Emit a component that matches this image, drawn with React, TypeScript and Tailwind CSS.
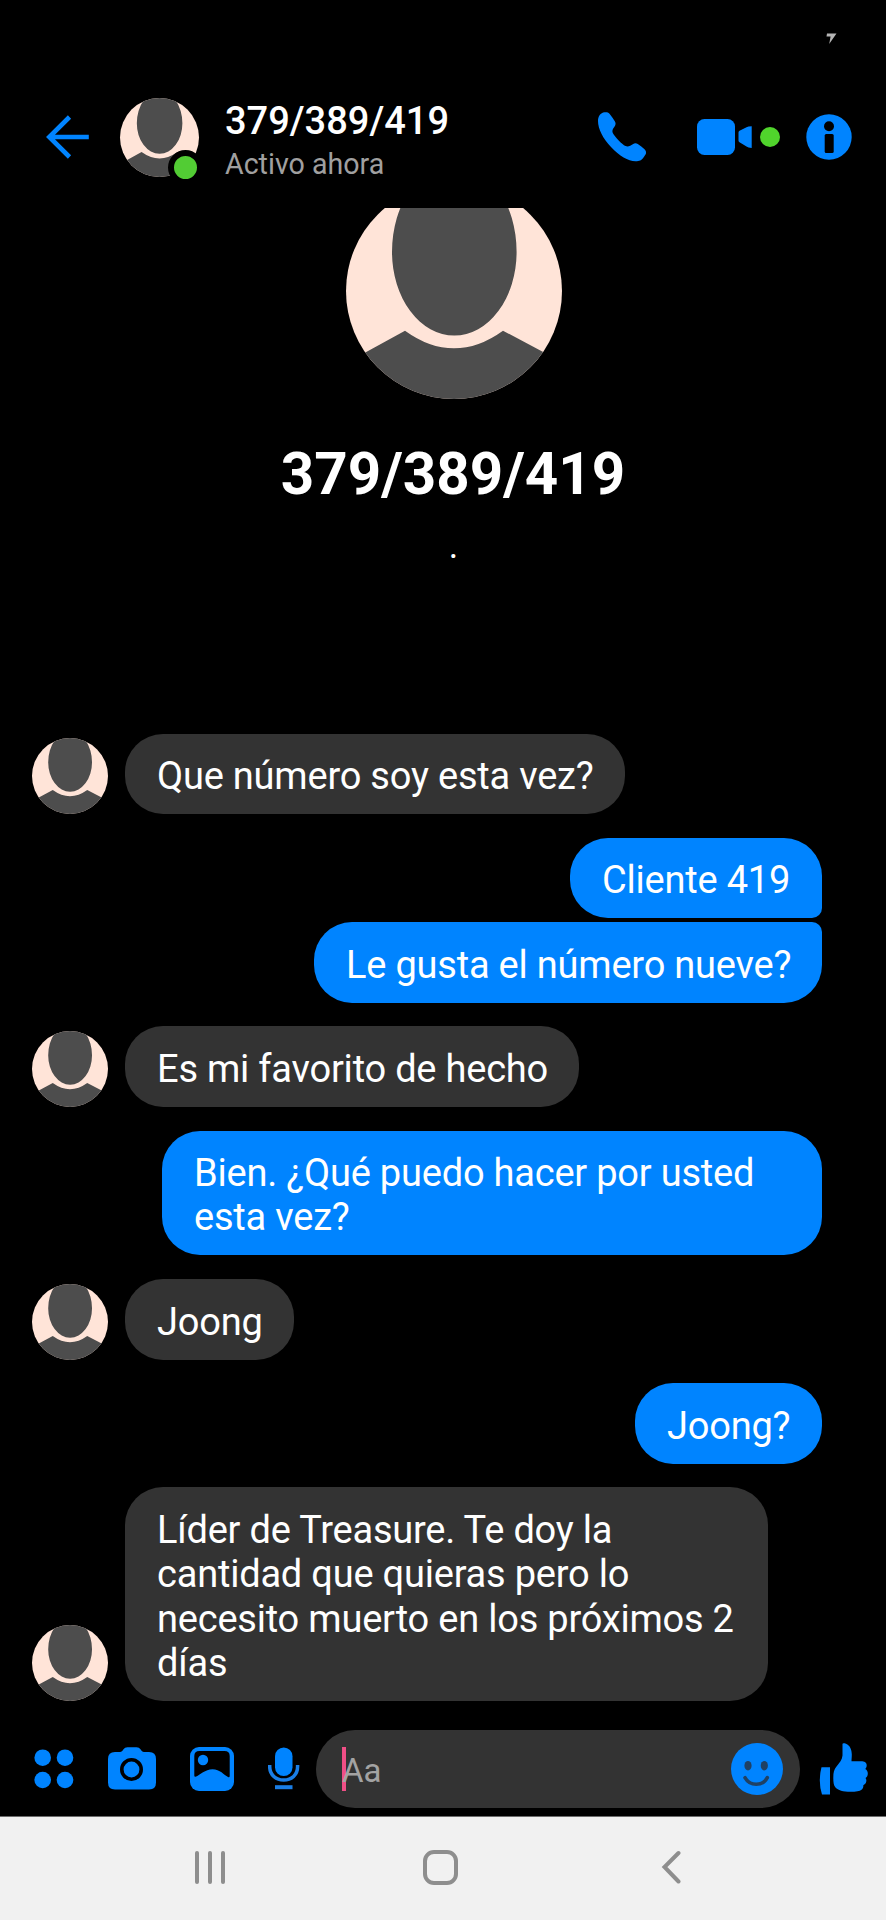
type Message = {
  text: string;
  mine: boolean;
  shape: string;
};

const CONTACT = '379/389/419';

const messages: Message[] = [
  { text: 'Que número soy esta vez?', mine: false, shape: 'w-[500px] rounded-[38px]' },
  { text: 'Cliente 419', mine: true, shape: 'mt-[23.6px] w-[252px] rounded-[38px] rounded-br-[10px]' },
  { text: 'Le gusta el número nueve?', mine: true, shape: 'mt-1 w-[508px] rounded-[38px] rounded-tr-[10px]' },
  { text: 'Es mi favorito de hecho', mine: false, shape: 'mt-[23.6px] w-[454px] rounded-[38px]' },
  { text: 'Bien. ¿Qué puedo hacer por usted\nesta vez?', mine: true, shape: 'mt-[23.6px] w-[660px] rounded-[38px]' },
  { text: 'Joong', mine: false, shape: 'mt-[23.6px] w-[169px] rounded-[38px]' },
  { text: 'Joong?', mine: true, shape: 'mt-[23.6px] w-[187px] rounded-[38px]' },
  {
    text: 'Líder de Treasure. Te doy la\ncantidad que quieras pero lo\nnecesito muerto en los próximos 2\ndías',
    mine: false,
    shape: 'mt-[23.6px] w-[643px] rounded-[38px]',
  },
];

function Avatar({ className }: { className: string }) {
  return (
    <div className={`shrink-0 overflow-hidden rounded-full bg-[#ffe4d8] ${className}`}>
      <svg viewBox="0 0 216 216" className="block size-full" fill="#4d4d4d">
        <path d="M46 69a62.3 88 0 0 1 124.6 0a62.3 83.5 0 0 1-124.6 0Z" />
        <path d="M-10 185L20.7 168.7L59 147.7Q108 183 157 147.7L196.7 168.7L226 185V216H-10Z" />
      </svg>
    </div>
  );
}

function Header() {
  return (
    <header className="flex h-[208px] shrink-0 flex-col">
      <div className="flex h-[97px] shrink-0 justify-end pt-[33px] pr-[49px]">
        <svg viewBox="0 0 11 11" className="size-[11px]" fill="#b5b5b5">
          <path d="M1 0.5H10.5L3.2 11L4.6 3.4H0.5Z" />
        </svg>
      </div>
      <div className="flex h-20 items-center">
        <svg viewBox="0 0 44 44" className="ml-[46px] size-11 shrink-0" fill="none" stroke="#0084ff" strokeWidth="4.6">
          <path d="M23.5 2L3.3 22L23.5 42M3 22H42.8" />
        </svg>
        <div className="relative ml-[30px]">
          <Avatar className="size-[79px]" />
          <span className="absolute -right-[4px] -bottom-[8.5px] size-[35px] rounded-full border-6 border-black bg-[#52cc34]" />
        </div>
        <div className="ml-[26px] flex w-[373px] flex-col pt-2">
          <span className="text-[38px] leading-[46px] font-medium whitespace-nowrap text-white">{CONTACT}</span>
          <span className="text-[28.600px] leading-[41px] whitespace-nowrap text-[#a0a0a0]">Activo ahora</span>
        </div>
        <svg viewBox="0 0 48 50" className="h-[50px] w-12 shrink-0" fill="#0084ff">
          <path d="M6.5 0.3C2.5 0.8 0 4.2 0 9C0 17 5 26.500 13 35C21.500 44 30 49.200 37.500 49.200C41.500 49.200 43.500 48.500 45.500 45.500L47.500 42.500C48.500 40.800 48.200 39 46.500 37.300C44.500 35.300 42.200 33.500 39.800 32C38 31 36.500 31.200 34.800 32.300C32.500 33.800 30 35.200 27.500 34C24 32.500 16.500 24.500 14.800 21C13.800 18.800 14.800 17 16.300 15C17.800 13 18 11.500 16.800 9.300C15.300 6.600 13.500 4 11.500 1.700C10.200 0.400 8.600 0 6.500 0.300Z" />
        </svg>
        <svg viewBox="0 0 55 36" className="ml-[51px] h-9 w-[55px] shrink-0" fill="#0084ff">
          <rect width="38" height="36" rx="7.500" />
          <path d="M41.500 13.500Q41.500 12.500 42.500 11.700L49.500 8.300Q51 7.500 54.700 7.300V29Q51 28.500 49.500 27.500L42.500 23.300Q41.500 22.500 41.500 21.500Z" />
        </svg>
        <span className="ml-2 size-5 shrink-0 rounded-full bg-[#50d42c]" />
        <svg viewBox="0 0 46 46" className="ml-[26px] size-[46px] shrink-0">
          <circle cx="23" cy="23" r="22.700" fill="#0084ff" />
          <circle cx="23" cy="12.300" r="5" fill="#000" />
          <rect x="18.700" y="20" width="9" height="19" rx="1.500" fill="#000" />
        </svg>
      </div>
    </header>
  );
}

function Profile() {
  return (
    <section className="flex h-[525.600px] shrink-0 flex-col items-center">
      <div className="ml-[22px] flex h-[191px] w-[216px] items-end overflow-hidden">
        <Avatar className="size-[216px]" />
      </div>
      <h1 className="mt-[42px] ml-5 text-[58.300px] leading-[66px] font-bold whitespace-nowrap text-white">{CONTACT}</h1>
      <p className="mt-[19px] ml-[21px] text-[36px] leading-10 text-white">.</p>
    </section>
  );
}

function MessageRow({ message }: { message: Message }) {
  const color = message.mine ? 'bg-[#0084ff]' : 'bg-[#333333]';
  return (
    <div className={`flex items-end ${message.mine ? 'justify-end pr-16' : 'pl-8'}`}>
      {!message.mine && <Avatar className="mr-[17px] size-[76px]" />}
      <p
        className={`px-8 pt-[20.600px] pb-[15.600px] text-[38px] leading-[44.350px] tracking-[-0.21px] whitespace-pre text-white ${color} ${message.shape}`}
      >
        {message.text}
      </p>
    </div>
  );
}

function Composer() {
  return (
    <footer className="flex h-[78px] shrink-0 items-center">
      <svg viewBox="0 0 40 40" className="ml-[34px] size-10 shrink-0" fill="#0084ff">
        <circle cx="8.700" cy="8.700" r="8.300" />
        <circle cx="31" cy="8.700" r="8.300" />
        <circle cx="8.700" cy="31" r="8.300" />
        <circle cx="31" cy="31" r="8.300" />
      </svg>
      <svg viewBox="0 0 48 43" className="ml-[34px] h-[43px] w-12 shrink-0">
        <path
          fill="#0084ff"
          d="M7 5H12C13.500 5 14.500 3.800 15.300 2.500Q16.800 0.300 19.500 0.300H28.500Q31.200 0.300 32.700 2.500C33.500 3.800 34.500 5 36 5H41Q48 5 48 12V35.500Q48 42.500 41 42.500H7Q0 42.500 0 35.500V12Q0 5 7 5Z"
        />
        <circle cx="23.500" cy="22.500" r="9.700" fill="#0084ff" stroke="#000" strokeWidth="3.600" />
      </svg>
      <svg viewBox="0 0 44 44" className="ml-[34px] size-11 shrink-0">
        <rect x="0" y="0" width="44" height="44" rx="9" fill="#0084ff" />
        <path
          fill="#000"
          d="M9.500 4H34.500Q39.700 4 39.700 9V29Q39.700 30.800 38 30C34 28 30 22.300 22.500 22.300C15 22.300 10.500 28 5.500 29.800Q4.300 30 4.300 28.500V9Q4.300 4 9.500 4Z"
        />
        <circle cx="13" cy="13" r="5.200" fill="#0084ff" />
      </svg>
      <svg viewBox="0 0 32 43" className="ml-[34px] h-[43px] w-8 shrink-0" fill="none">
        <rect x="7" y="0.500" width="17.500" height="28.500" rx="8.750" fill="#0084ff" />
        <path d="M1.700 18V19.500C1.700 28 8 33 15.700 33C23.500 33 29.600 28 29.600 19.500V18" stroke="#1a7ee6" strokeWidth="3.500" />
        <path d="M7 40.200H24.500" stroke="#1a7ee6" strokeWidth="4" />
      </svg>
      <div className="relative ml-4 flex h-[78px] w-[484px] shrink-0 items-center justify-between rounded-full bg-[#333333] pr-[17px] pl-[26px]">
        <span className="absolute top-[17px] left-[26px] h-[44px] w-1 bg-[#f04f86]" />
        <span className="relative pt-[5px] text-[33px] leading-10 text-[#a3a3a3]">Aa</span>
        <svg viewBox="0 0 52 52" className="size-[52px]">
          <circle cx="26" cy="26" r="26" fill="#0084ff" />
          <ellipse cx="17" cy="22.700" rx="3.600" ry="4.800" fill="#1f4164" />
          <ellipse cx="33.300" cy="22.700" rx="3.600" ry="4.800" fill="#1f4164" />
          <path d="M14 34.700C19 43.500 31.500 43.500 36.300 34.700" fill="none" stroke="#1f4164" strokeWidth="3.600" strokeLinecap="round" />
        </svg>
      </div>
      <svg viewBox="0 0 49 52" className="ml-[19px] h-[52px] w-[49px] shrink-0" fill="#0084ff">
        <path d="M2.500 24.300H11V51.500H3Q0.800 45 0.800 37.500Q0.800 30 2.500 24.300Z" />
        <path d="M23.500 1C23.500 0.200 25 0.200 27 0.800C31 2.200 32.800 7 32.800 11.500C32.800 14.200 32.500 16.500 32.500 18.300H42C45.500 18.300 47.700 19.500 47.700 22.300C47.700 24.300 47 25.200 46.300 26C48 27 48.800 28.500 48.800 30.500C48.800 32.500 48 34 46.500 35C47.300 36 47.500 37 47.300 38.300C47 40.500 45.800 41.500 44.300 42.200C44.500 44 44 45.500 42.500 46.800C40.800 48.300 37 48.800 31.500 48.800C24 48.800 19 47.300 16.500 44.500C14.500 42.300 14.300 39 14.300 34.500C14.300 29.500 15 26.500 17.500 23.500C20.500 20 23.200 16.500 23.500 12.500Z" />
      </svg>
    </footer>
  );
}

function SystemNav() {
  return (
    <nav className="mt-auto flex h-[104px] shrink-0 items-start border-t border-[#6b6b6b] bg-[#f1f1f1]">
      <div className="mt-[34px] ml-[195px] flex gap-[9px]">
        <span className="h-[33px] w-1 rounded-full bg-[#8e8e8e]" />
        <span className="h-[33px] w-1 rounded-full bg-[#8e8e8e]" />
        <span className="h-[33px] w-1 rounded-full bg-[#8e8e8e]" />
      </div>
      <span className="mt-[33px] ml-[198px] size-[35px] rounded-[11px] border-4 border-[#8e8e8e]" />
      <svg viewBox="0 0 20 34" className="mt-[33px] ml-[203px] h-[34px] w-5" fill="none" stroke="#8e8e8e" strokeWidth="4" strokeLinecap="round">
        <path d="M17.500 3L3.500 17L17.500 31.500" />
      </svg>
    </nav>
  );
}

export default function App() {
  return (
    <div className="flex h-[1920px] w-[886px] flex-col overflow-hidden bg-black font-['Roboto',sans-serif]">
      <Header />
      <Profile />
      <main className="flex h-[996.400px] shrink-0 flex-col">
        {messages.map((message) => (
          <MessageRow key={message.text} message={message} />
        ))}
      </main>
      <Composer />
      <SystemNav />
    </div>
  );
}
